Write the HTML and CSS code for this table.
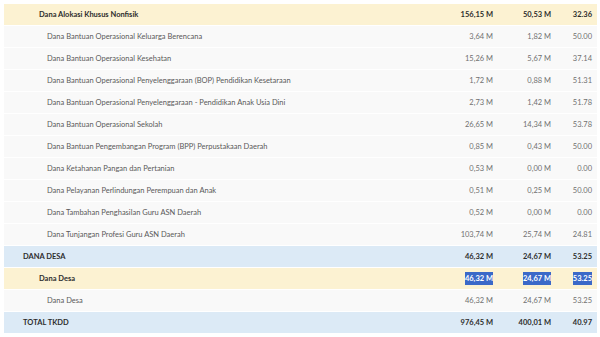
FILE: index.html
```html
<!DOCTYPE html>
<html>
<head>
<meta charset="utf-8">
<link rel="stylesheet" href="styles.css">
</head>
<body>
<table class="tkdd">
<colgroup><col class="c-name"><col class="c-num1"><col class="c-num2"><col class="c-pct"></colgroup>
<tbody>
<tr class="r-yellow bold"><td class="l1">Dana Alokasi Khusus Nonfisik</td><td>156,15 M</td><td>50,53 M</td><td>32.36</td></tr>
<tr><td class="l2">Dana Bantuan Operasional Keluarga Berencana</td><td>3,64 M</td><td>1,82 M</td><td>50.00</td></tr>
<tr><td class="l2">Dana Bantuan Operasional Kesehatan</td><td>15,26 M</td><td>5,67 M</td><td>37.14</td></tr>
<tr><td class="l2">Dana Bantuan Operasional Penyelenggaraan (BOP) Pendidikan Kesetaraan</td><td>1,72 M</td><td>0,88 M</td><td>51.31</td></tr>
<tr><td class="l2">Dana Bantuan Operasional Penyelenggaraan - Pendidikan Anak Usia Dini</td><td>2,73 M</td><td>1,42 M</td><td>51.78</td></tr>
<tr><td class="l2">Dana Bantuan Operasional Sekolah</td><td>26,65 M</td><td>14,34 M</td><td>53.78</td></tr>
<tr><td class="l2">Dana Bantuan Pengembangan Program (BPP) Perpustakaan Daerah</td><td>0,85 M</td><td>0,43 M</td><td>50.00</td></tr>
<tr><td class="l2">Dana Ketahanan Pangan dan Pertanian</td><td>0,53 M</td><td>0,00 M</td><td>0.00</td></tr>
<tr><td class="l2">Dana Pelayanan Perlindungan Perempuan dan Anak</td><td>0,51 M</td><td>0,25 M</td><td>50.00</td></tr>
<tr><td class="l2">Dana Tambahan Penghasilan Guru ASN Daerah</td><td>0,52 M</td><td>0,00 M</td><td>0.00</td></tr>
<tr><td class="l2">Dana Tunjangan Profesi Guru ASN Daerah</td><td>103,74 M</td><td>25,74 M</td><td>24.81</td></tr>
<tr class="r-blue bold"><td class="l0">DANA DESA</td><td>46,32 M</td><td>24,67 M</td><td>53.25</td></tr>
<tr class="r-yellow bold"><td class="l1">Dana Desa</td><td><span class="sel">46,32 M</span></td><td><span class="sel">24,67 M</span></td><td><span class="sel">53.25</span></td></tr>
<tr><td class="l2">Dana Desa</td><td>46,32 M</td><td>24,67 M</td><td>53.25</td></tr>
<tr class="r-blue bold"><td class="l0">TOTAL TKDD</td><td>976,45 M</td><td>400,01 M</td><td>40.97</td></tr>
</tbody>
</table>
</body>
</html>
```
FILE: styles.css
```css
html, body {
  margin: 0;
  padding: 0;
  background: #ffffff;
}
body {
  padding: 4px 3px 0 4px;
  font-family: "Lato", "Open Sans", sans-serif;
  font-size: 7.5px;
  color: #555;
}
.tkdd {
  width: 593px;
  border-collapse: collapse;
  table-layout: fixed;
}
.c-name { width: 436px; }
.c-num1 { width: 58px; }
.c-num2 { width: 58px; }
.c-pct { width: 41px; }
.tkdd td {
  height: 21px;
  padding: 0 5px 0 0;
  text-align: right;
  white-space: nowrap;
  background: #f9f9f9;
  border-bottom: 1px solid #ffffff;
  color: #707070;
}
.tkdd td:first-child {
  text-align: left;
  color: #5a5a5a;
}
.l0 { padding-left: 19px !important; }
.l1 { padding-left: 35px !important; }
.l2 { padding-left: 43px !important; }
.bold td {
  font-weight: 700;
  color: #2d2d2d !important;
}
.r-yellow td { background: #fcf2d2; }
.r-blue td { background: #dceaf6; }
.sel {
  background: #3b69c8;
  color: #ffffff;
  padding: 2px 0;
}
```
